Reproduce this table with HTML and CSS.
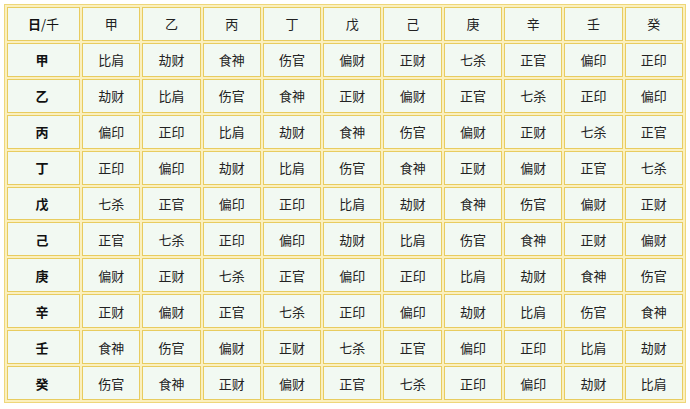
FILE: index.html
```html
<!DOCTYPE html>
<html lang="zh">
<head>
<meta charset="utf-8">
<link rel="stylesheet" href="styles.css">
</head>
<body>
<table class="grid">
<tr class="head"><td class="corner"><b>日</b>/千</td><td>甲</td><td>乙</td><td>丙</td><td>丁</td><td>戊</td><td>己</td><td>庚</td><td>辛</td><td>壬</td><td>癸</td></tr>
<tr><th>甲</th><td>比肩</td><td>劫财</td><td>食神</td><td>伤官</td><td>偏财</td><td>正财</td><td>七杀</td><td>正官</td><td>偏印</td><td>正印</td></tr>
<tr><th>乙</th><td>劫财</td><td>比肩</td><td>伤官</td><td>食神</td><td>正财</td><td>偏财</td><td>正官</td><td>七杀</td><td>正印</td><td>偏印</td></tr>
<tr><th>丙</th><td>偏印</td><td>正印</td><td>比肩</td><td>劫财</td><td>食神</td><td>伤官</td><td>偏财</td><td>正财</td><td>七杀</td><td>正官</td></tr>
<tr><th>丁</th><td>正印</td><td>偏印</td><td>劫财</td><td>比肩</td><td>伤官</td><td>食神</td><td>正财</td><td>偏财</td><td>正官</td><td>七杀</td></tr>
<tr><th>戊</th><td>七杀</td><td>正官</td><td>偏印</td><td>正印</td><td>比肩</td><td>劫财</td><td>食神</td><td>伤官</td><td>偏财</td><td>正财</td></tr>
<tr><th>己</th><td>正官</td><td>七杀</td><td>正印</td><td>偏印</td><td>劫财</td><td>比肩</td><td>伤官</td><td>食神</td><td>正财</td><td>偏财</td></tr>
<tr><th>庚</th><td>偏财</td><td>正财</td><td>七杀</td><td>正官</td><td>偏印</td><td>正印</td><td>比肩</td><td>劫财</td><td>食神</td><td>伤官</td></tr>
<tr><th>辛</th><td>正财</td><td>偏财</td><td>正官</td><td>七杀</td><td>正印</td><td>偏印</td><td>劫财</td><td>比肩</td><td>伤官</td><td>食神</td></tr>
<tr><th>壬</th><td>食神</td><td>伤官</td><td>偏财</td><td>正财</td><td>七杀</td><td>正官</td><td>偏印</td><td>正印</td><td>比肩</td><td>劫财</td></tr>
<tr><th>癸</th><td>伤官</td><td>食神</td><td>正财</td><td>偏财</td><td>正官</td><td>七杀</td><td>正印</td><td>偏印</td><td>劫财</td><td>比肩</td></tr>
</table>
</body>
</html>
```
FILE: styles.css
```css
html, body {
  margin: 0;
  padding: 0;
  background: #ffffff;
}
body {
  padding: 4px 0 0 4px;
  font-family: "Noto Sans CJK SC", "Noto Sans", sans-serif;
  font-size: 13px;
  color: #222222;
}
.grid {
  width: 682px;
  height: 399px;
  border: 1px solid #eed77a;
  border-collapse: separate;
  border-spacing: 2px;
  background: #fbf0bf;
  table-layout: fixed;
}
.grid td, .grid th {
  border: 1px solid #e8cc60;
  background: #f2f9f2;
  text-align: center;
  vertical-align: middle;
  padding: 0;
  font-weight: normal;
  line-height: 1;
}
.grid th {
  font-weight: bold;
  color: #111111;
  padding-right: 3px;
}
.grid tr td:first-child,
.grid tr th:first-child {
  width: 71px;
}
.corner {
  color: #111111;
}
.corner b {
  font-weight: bold;
}
```
